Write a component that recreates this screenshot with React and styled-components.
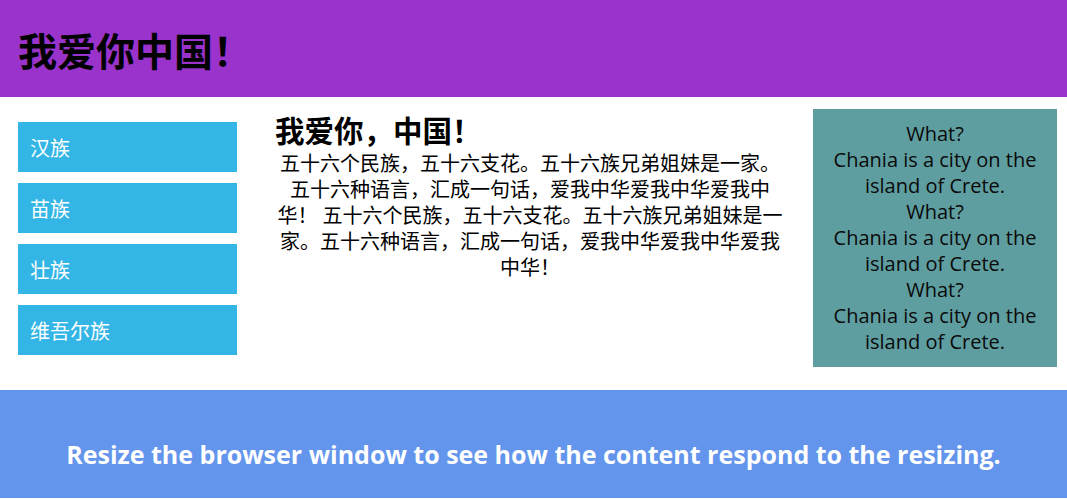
import React from "react";
import styled, { createGlobalStyle } from "styled-components";

const GlobalStyle = createGlobalStyle`
  * {
    box-sizing: border-box;
  }
  body {
    margin: 0;
    background: #ffffff;
    font-family: "Open Sans", "Noto Sans CJK SC", sans-serif;
    color: #000000;
  }
`;

const Header = styled.header`
  height: 97px;
  padding: 0 18px;
  display: flex;
  align-items: center;
  background-color: #9933cc;

  h1 {
    margin: 0;
    font-size: 39px;
    line-height: 48px;
    font-weight: 700;
    font-family: "Noto Sans CJK SC", sans-serif;
  }
`;

const Row = styled.div`
  display: flex;
  align-items: flex-start;
  padding: 12px 10px 23px 18px;
`;

const Menu = styled.ul`
  list-style: none;
  margin: 13px 0 0;
  padding: 0;
  width: 219px;
  flex-shrink: 0;
`;

const MenuItem = styled.li`
  height: 50px;
  margin-bottom: 11px;
  padding-left: 12px;
  display: flex;
  align-items: center;
  background-color: #33b5e5;
  color: #ffffff;
  font-size: 20px;

  &:last-child {
    margin-bottom: 0;
  }
`;

const Main = styled.main`
  width: 510px;
  margin-left: 38px;
  padding-top: 4px;
  flex-shrink: 0;

  h2 {
    margin: 0 0 2px;
    font-size: 29.5px;
    line-height: 36px;
    font-weight: 700;
  }

  p {
    margin: 0;
    font-size: 20px;
    line-height: 26px;
    text-align: center;
  }
`;

const Aside = styled.aside`
  width: 244px;
  margin-left: 28px;
  padding: 12px 6px;
  flex-shrink: 0;
  background-color: #5f9ea0;
  text-align: center;
  font-size: 20px;
  line-height: 26px;
  color: #0a0a0a;

  p {
    margin: 0;
  }
`;

const Footer = styled.footer`
  height: 108px;
  padding-top: 49px;
  background-color: #6495ed;
  color: #ffffff;
  text-align: center;

  p {
    margin: 0;
    font-size: 25px;
    line-height: 30px;
    font-weight: 700;
  }
`;

const peoples = ["汉族", "苗族", "壮族", "维吾尔族"];

const verse =
  "五十六个民族，五十六支花。五十六族兄弟姐妹是一家。五十六种语言，汇成一句话，爱我中华爱我中华爱我中华！";

export default function App() {
  return (
    <>
      <GlobalStyle />
      <Header>
        <h1>我爱你中国！</h1>
      </Header>
      <Row>
        <Menu>
          {peoples.map((p) => (
            <MenuItem key={p}>{p}</MenuItem>
          ))}
        </Menu>
        <Main>
          <h2>我爱你，中国！</h2>
          <p>
            {verse} {verse}
          </p>
        </Main>
        <Aside>
          {[0, 1, 2].map((i) => (
            <React.Fragment key={i}>
              <p>What?</p>
              <p>Chania is a city on the island of Crete.</p>
            </React.Fragment>
          ))}
        </Aside>
      </Row>
      <Footer>
        <p>Resize the browser window to see how the content respond to the resizing.</p>
      </Footer>
    </>
  );
}
